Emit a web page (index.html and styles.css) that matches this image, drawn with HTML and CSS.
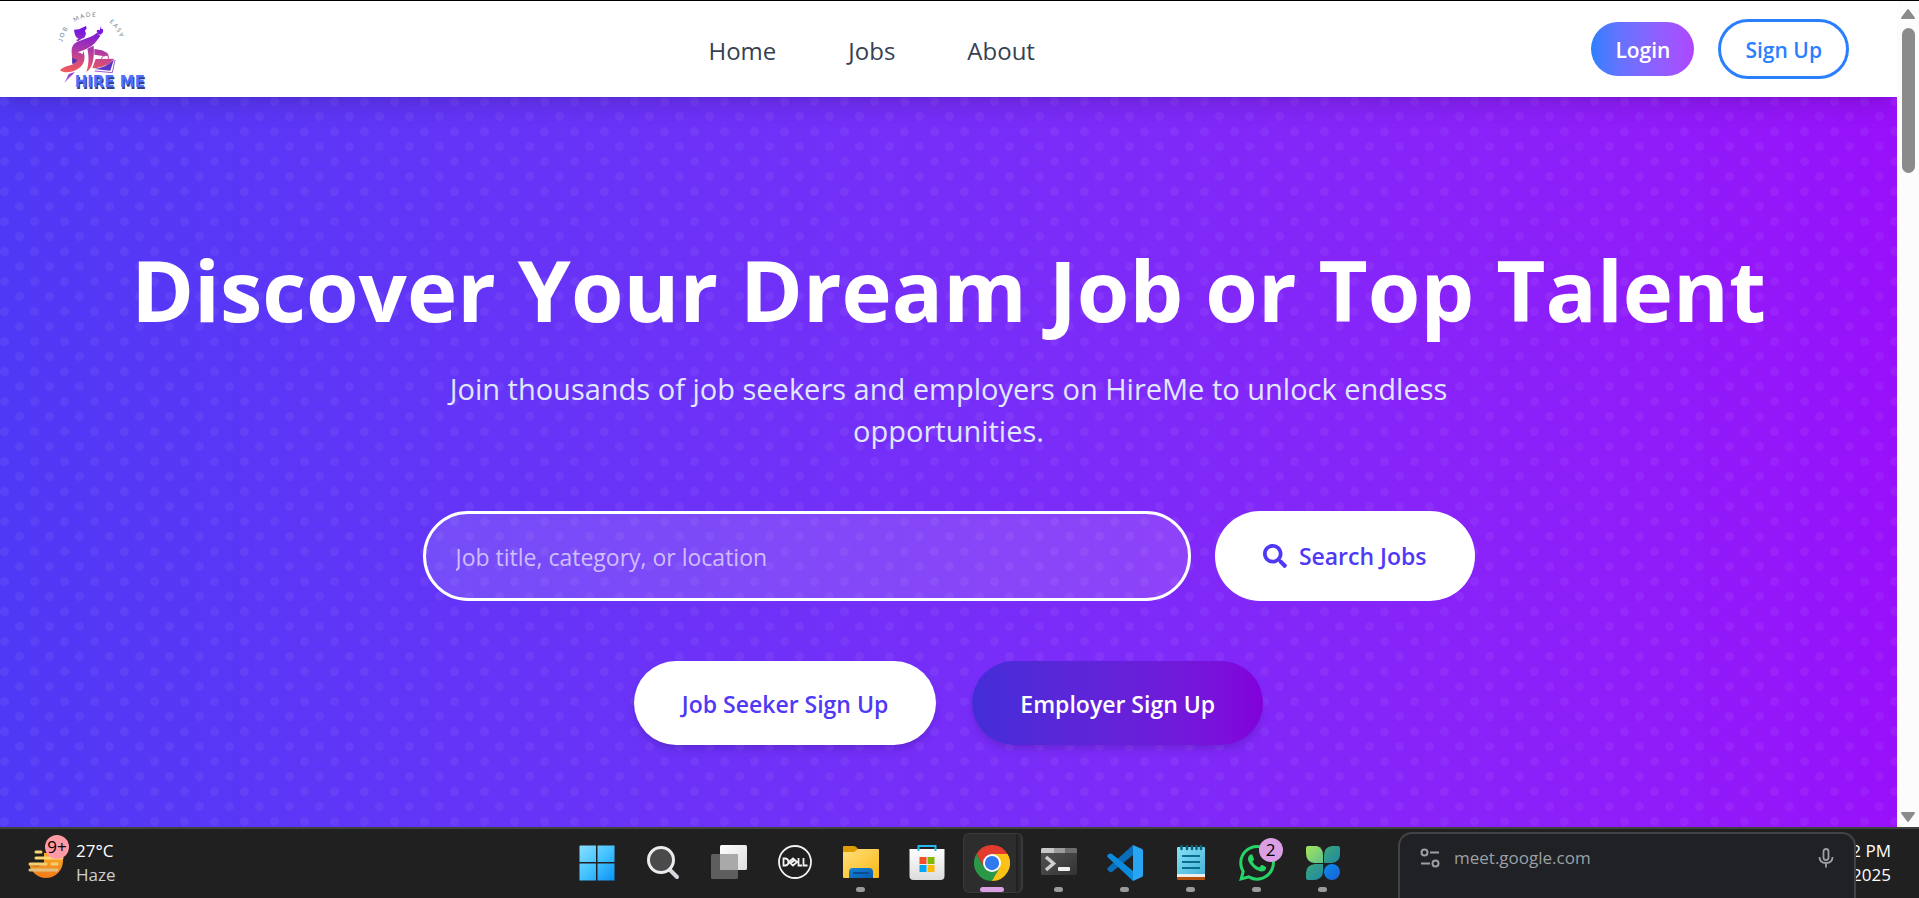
FILE: index.html
```html
<!DOCTYPE html>
<html lang="en">
<head>
<meta charset="utf-8">
<title>HireMe</title>
<link rel="stylesheet" href="styles.css">
</head>
<body>
<div class="browser">
  <div class="page">
    <header class="header">
      <a class="logo" href="#" aria-label="Hire Me">
        <svg width="104" height="96" viewBox="144 3 312 288">
          <defs>
            <linearGradient id="fig" gradientUnits="userSpaceOnUse" x1="250" y1="80" x2="240" y2="215">
              <stop offset="0" stop-color="#6d10ea"/><stop offset=".45" stop-color="#a535b0"/><stop offset="1" stop-color="#ef5a5c"/>
            </linearGradient>
            <linearGradient id="foot" gradientUnits="userSpaceOnUse" x1="215" y1="215" x2="196" y2="248">
              <stop offset="0" stop-color="#8a35c8"/><stop offset="1" stop-color="#b77be0"/>
            </linearGradient>
            <path id="arc" d="M187 138 A88 88 0 0 1 363 138"/>
          </defs>
          <g class="logo-motto">
            <text><textPath href="#arc" startOffset="12">J O B</textPath></text>
            <text><textPath href="#arc" startOffset="84">M A D E</textPath></text>
            <text><textPath href="#arc" startOffset="194">E A S Y</textPath></text>
          </g>
          <g fill="url(#fig)">
            <path d="M222 89 L237 88 L258 78 L260 85 L255 92 L258 101 L254 112 L243 118 L234 124 L228 121 L236 116 Q224 113 222 89Z"/>
            <path d="M303 78 L304 88 L309 87 L309 97 L302 104 L294 102 L290 94 L292 89 L299 91Z"/>
            <path d="M291 98 C282 107 262 114 240 122 C222 128 214 137 215 156 L217 188 C224 196 243 190 249 176 C253 165 245 159 232 157 C252 152 278 140 289 124 L301 108Z"/>
            <path d="M250 152 C258 176 252 194 236 205 C220 217 194 222 180 211 C186 203 199 198 213 195 C232 190 246 174 250 152Z"/>
            <path d="M262 146 C268 170 266 196 259 216 C276 206 284 180 281 137Z"/>
            <path d="M283 147 L306 151 L322 159 L327 167 L320 164 L314 169 L283 164Z"/>
            <path d="M287 177 L342 176 L330 190 Q304 205 277 205Z"/>
          </g>
          <path d="M217 174 L232 180 Q226 190 217 193Z" fill="#4b2fc0"/>
          <path d="M342 178 L331 212 L283 207 Q322 202 342 178Z" fill="#5a36c4"/>
          <path d="M345 180 L337 218 L284 213" fill="none" stroke="#9b5ad0" stroke-width="3"/>
          <path d="M304 176 Q308 164 324 167 L326 176" fill="none" stroke="#b94293" stroke-width="3"/>
          <path d="M193 249 L206 222 L225 216Z" fill="url(#foot)"/>
          <g class="logo-name"><text x="227" y="266" class="logo-shade">HIRE ME</text><text x="224" y="262">HIRE ME</text></g>
        </svg>
      </a>
      <nav class="nav">
        <a href="#">Home</a>
        <a href="#">Jobs</a>
        <a href="#">About</a>
      </nav>
      <div class="account">
        <button class="login">Login</button>
        <button class="signup">Sign Up</button>
      </div>
    </header>
    <main class="hero">
      <h1>Discover Your Dream Job or Top Talent</h1>
      <p class="lead">Join thousands of job seekers and employers on HireMe to unlock endless opportunities.</p>
      <form class="search">
        <input type="text" aria-label="Search jobs" placeholder="Job title, category, or location">
        <button type="button">
          <svg width="24" height="24" viewBox="0 0 512 512" fill="currentColor" aria-hidden="true"><path d="M505 442.700 405.300 343c-4.500-4.500-10.600-7-17-7H372c27.600-35.300 44-79.700 44-128C416 93.100 322.900 0 208 0S0 93.100 0 208s93.100 208 208 208c48.300 0 92.700-16.400 128-44v16.300c0 6.400 2.500 12.500 7 17l99.700 99.700c9.400 9.400 24.600 9.400 33.900 0l28.300-28.300c9.400-9.400 9.400-24.600.1-34zM208 336c-70.700 0-128-57.200-128-128 0-70.700 57.200-128 128-128 70.700 0 128 57.200 128 128 0 70.700-57.200 128-128 128z"/></svg>
          Search Jobs
        </button>
      </form>
      <div class="actions">
        <a class="seeker" href="#">Job Seeker Sign Up</a>
        <a class="employer" href="#">Employer Sign Up</a>
      </div>
    </main>
  </div>
  <div class="scrollbar" aria-hidden="true">
    <svg width="16" height="12" viewBox="0 0 16 12"><path d="M8 2 L14 10 H2Z" fill="#8b8b8b" stroke="#8b8b8b" stroke-width="2" stroke-linejoin="round"/></svg>
    <div class="track"><div class="thumb"></div></div>
    <svg width="16" height="12" viewBox="0 0 16 12"><path d="M8 10 L14 2 H2Z" fill="#8b8b8b" stroke="#8b8b8b" stroke-width="2" stroke-linejoin="round"/></svg>
  </div>
</div>

<footer class="taskbar">
  <div class="weather">
    <div class="weather-icon">
      <svg width="36" height="32" viewBox="0 0 36 32">
        <defs><linearGradient id="sun" x1="0" y1="0" x2="0" y2="1"><stop offset="0" stop-color="#fbc02d"/><stop offset="1" stop-color="#f07a1a"/></linearGradient></defs>
        <circle cx="18" cy="14" r="17" fill="url(#sun)"/>
        <path d="M0 0H36V6H0Z M0 6H16V16H0Z" fill="#202020"/>
        <path d="M2 17 Q8 20 14 17" stroke="#a8691e" stroke-width="2" fill="none"/>
        <g stroke-width="3" stroke-linecap="round"><path d="M8 5H13M8 11H34" stroke="#f7d774"/><path d="M2 17H18M24 17H29" stroke="#f3cf73"/><path d="M2 23H29" stroke="#e2bf80"/></g>
      </svg>
      <span class="badge badge-pink">9+</span>
    </div>
    <div class="stack"><span>27°C</span><span class="dim">Haze</span></div>
  </div>

  <div class="apps">
    <button class="app" aria-label="Start">
      <svg width="36" height="36" viewBox="0 0 36 36"><defs><linearGradient id="win" gradientUnits="userSpaceOnUse" x1="0" y1="0" x2="36" y2="36"><stop offset="0" stop-color="#8de0ff"/><stop offset=".5" stop-color="#43c3ff"/><stop offset="1" stop-color="#0a90f5"/></linearGradient></defs><path d="M1 .5H17V17H.5V1ZM18.500 .5H35.500V17H18.500ZM.5 18.500H17V35.500H.5ZM18.500 18.500H35.500V35.500H18.500Z" fill="url(#win)"/></svg>
    </button>
    <button class="app" aria-label="Search">
      <svg width="36" height="36" viewBox="0 0 36 36"><path d="M24 24 L32 32" stroke="#d5d9de" stroke-width="4" stroke-linecap="round"/><circle cx="16" cy="15" r="12.500" fill="#4a4a4a" stroke="#e9ebee" stroke-width="3"/></svg>
    </button>
    <button class="app" aria-label="Task view">
      <svg width="36" height="36" viewBox="0 0 36 36"><defs><linearGradient id="tv" x1="0" y1="0" x2="1" y2="1"><stop offset="0" stop-color="#fff"/><stop offset="1" stop-color="#dcdcdc"/></linearGradient></defs><rect x="9" y="0" width="27" height="25" rx="1.500" fill="url(#tv)"/><rect x="0" y="9" width="27" height="25" rx="1.500" fill="#666" fill-opacity=".88"/><rect x="9" y="9" width="18" height="16" fill="#a9a9a9"/></svg>
    </button>
    <button class="app" aria-label="Dell">
      <svg width="36" height="36" viewBox="0 0 36 36"><g fill="none" stroke="#f2f2f2"><circle cx="18" cy="17" r="16" stroke-width="1.800"/><path stroke-width="1.800" d="M6.500 13.500V20.500H8.500Q11.500 20 11.500 17 11.500 14 8.500 13.500ZM12 17 L16 13.500 20 17 16 20.500ZM14 18 L18 14.500M21.500 13V20.500H25M26.500 13V20.500H30.500"/></g></svg>
    </button>
    <button class="app running" aria-label="File Explorer">
      <svg width="36" height="36" viewBox="0 0 36 36"><defs><linearGradient id="fd" x1="0" y1="0" x2="1" y2="1"><stop offset="0" stop-color="#ffdf7e"/><stop offset="1" stop-color="#fcb813"/></linearGradient><linearGradient id="fb" x1="0" y1="0" x2="1" y2="1"><stop offset="0" stop-color="#1484d6"/><stop offset="1" stop-color="#0a5cad"/></linearGradient></defs><path d="M0 10V2Q0 1 1 1H11Q13 1 15 4H22V10Z" fill="#dd9b04"/><path d="M0 8Q0 7 1 7H11L15 4H35Q36 4 36 5V32Q36 33 35 33H1Q0 33 0 32Z" fill="url(#fd)"/><path d="M6 33V27Q6 23 10 23H26Q30 23 30 27V33Z" fill="url(#fb)"/><path d="M11 28H25" stroke="#0c4a91" stroke-width="2" stroke-linecap="round"/></svg>
    </button>
    <button class="app" aria-label="Microsoft Store">
      <svg width="36" height="36" viewBox="0 0 36 36"><defs><linearGradient id="st" x1="0" y1="0" x2="0" y2="1"><stop offset="0" stop-color="#fff"/><stop offset="1" stop-color="#dcdcdc"/></linearGradient></defs><path d="M.5 4H35.500V31Q35.500 35 31.500 35H4.500Q.5 35 .5 31Z" fill="url(#st)"/><path d="M9.500 6V1H26.500V6" stroke="#27b7ee" stroke-width="2" fill="none"/><path d="M10.500 12H17.500V19H10.500Z" fill="#f25022"/><path d="M18.500 12H25.500V19H18.500Z" fill="#7fba00"/><path d="M10.500 20H17.500V27H10.500Z" fill="#00a4ef"/><path d="M18.500 20H25.500V27H18.500Z" fill="#ffb900"/></svg>
    </button>
    <button class="app active" aria-label="Chrome">
      <svg width="36" height="36" viewBox="0 0 48 48"><path d="M24 24 V12 H44.800 A24 24 0 0 1 24 48Z" fill="#fbc116"/><path d="M3.200 12 L13.600 30 L24 24 L24 12 H44.800 A24 24 0 0 0 3.200 12Z" fill="#e33b2e"/><path d="M3.200 12 A24 24 0 0 0 24 48 L34.400 30 L24 24 L13.600 30Z" fill="#2a9846"/><circle cx="24" cy="24" r="12" fill="#fff"/><circle cx="24" cy="24" r="9.500" fill="#3079ee"/></svg>
    </button>
    <button class="app running" aria-label="Terminal">
      <svg width="36" height="36" viewBox="0 0 36 36"><defs><linearGradient id="tm" x1="0" y1="0" x2="1" y2="1"><stop offset="0" stop-color="#555"/><stop offset="1" stop-color="#333"/></linearGradient></defs><rect y="3" width="36" height="27" rx="1.500" fill="url(#tm)"/><path d="M1.500 3H13V8H0V4.500Q0 3 1.500 3Z" fill="#c8c8c8"/><path d="M13 3H24V8H13Z" fill="#9c9c9c"/><path d="M24 3H34.500Q36 3 36 4.500V8H24Z" fill="#6e6e6e"/><path d="M5 12 L12.500 18.500 L5 25" stroke="#cfcfcf" stroke-width="3.500" fill="none"/><rect x="17" y="22" width="12" height="4" rx="1" fill="#f0f0f0"/></svg>
    </button>
    <button class="app running" aria-label="Visual Studio Code">
      <svg width="36" height="36" viewBox="0 0 36 36"><path d="M26 0 L26 10 L5 27 Q3 28 1 25.500 Q-.5 23.500 1 22.500Z" fill="#0a6db8"/><path d="M1 12.500 Q-.5 11 1 9.500 Q3 8 5 9 L26 26 V36Z" fill="#0c8bdc"/><path d="M26 0 L35 4 Q36 4.500 36 6V30Q36 31.500 35 32 L26 36Z" fill="#27a5f3"/></svg>
    </button>
    <button class="app running" aria-label="Notepad">
      <svg width="36" height="36" viewBox="0 0 36 36"><defs><linearGradient id="np" x1="0" y1="0" x2="1" y2="1"><stop offset="0" stop-color="#86e2f6"/><stop offset="1" stop-color="#46b4d8"/></linearGradient></defs><path d="M4 30H32V34Q32 35 31 35H5Q4 35 4 34Z" fill="#b6500d"/><path d="M4 28H32V32H4Z" fill="#eee"/><path d="M5 2H31Q32 2 32 3V29H4V3Q4 2 5 2Z" fill="url(#np)"/><path d="M9 11H27M9 17H27M9 23H27" stroke="#0b6c92" stroke-width="2"/><path d="M8.500 1V4M14 1V4M19 1V4M23.500 1V4M28 1V4" stroke="#0f607c" stroke-width="2.500" stroke-linecap="round"/></svg>
    </button>
    <button class="app running" aria-label="WhatsApp">
      <svg width="36" height="36" viewBox="0 0 24 24" fill="#25d366"><path d="M17.472 14.382c-.297-.149-1.758-.867-2.030-.967-.273-.099-.471-.148-.67.150-.197.297-.767.966-.940 1.164-.173.199-.347.223-.644.075-.297-.150-1.255-.463-2.390-1.475-.883-.788-1.480-1.761-1.653-2.059-.173-.297-.018-.458.130-.606.134-.133.298-.347.446-.520.149-.174.198-.298.298-.497.099-.198.050-.371-.025-.520-.075-.149-.669-1.612-.916-2.207-.242-.579-.487-.500-.669-.510-.173-.008-.371-.010-.570-.010-.198 0-.520.074-.792.372-.272.297-1.040 1.016-1.040 2.479 0 1.462 1.065 2.875 1.213 3.074.149.198 2.096 3.200 5.077 4.487.709.306 1.262.489 1.694.625.712.227 1.360.195 1.871.118.571-.085 1.758-.719 2.006-1.413.248-.694.248-1.289.173-1.413-.074-.124-.272-.198-.570-.347m-5.421 7.403h-.004a9.870 9.870 0 01-5.031-1.378l-.361-.214-3.741.982.998-3.648-.235-.374a9.860 9.860 0 01-1.510-5.260c.001-5.450 4.436-9.884 9.888-9.884 2.640 0 5.122 1.030 6.988 2.898a9.825 9.825 0 012.893 6.994c-.003 5.450-4.437 9.884-9.885 9.884m8.413-18.297A11.815 11.815 0 0012.050 0C5.495 0 .160 5.335.157 11.892c0 2.096.547 4.142 1.588 5.945L.057 24l6.305-1.654a11.882 11.882 0 005.683 1.448h.005c6.554 0 11.890-5.335 11.893-11.893a11.821 11.821 0 00-3.480-8.413z"/></svg>
      <span class="badge badge-plum">2</span>
    </button>
    <button class="app running" aria-label="Clover app">
      <svg width="36" height="36" viewBox="0 0 36 36"><defs><linearGradient id="c1" x1="0" y1="0" x2="1" y2="1"><stop offset="0" stop-color="#a6e65a"/><stop offset="1" stop-color="#5fc08b"/></linearGradient><linearGradient id="c2" x1="0" y1="0" x2="1" y2="1"><stop offset="0" stop-color="#3aa878"/><stop offset="1" stop-color="#2188a5"/></linearGradient><linearGradient id="c3" x1="0" y1="0" x2="1" y2="1"><stop offset="0" stop-color="#0b8df0"/><stop offset="1" stop-color="#1b5fd0"/></linearGradient></defs><path d="M3 1H12Q18 3 18 10V18H9Q1 17 1 8V3Q1 1 3 1Z" fill="url(#c1)"/><path d="M33 1H27Q19 2 19 10V18H27Q35 17 35 9V3Q35 1 33 1Z" fill="url(#c2)"/><path d="M3 35H10Q18 34 18 26V19H10Q1 20 1 28V33Q1 35 3 35Z" fill="url(#c2)"/><circle cx="27" cy="27" r="8" fill="url(#c3)"/></svg>
    </button>
  </div>

  <div class="clock stack"><span>2 PM</span><span>2025</span></div>

  <div class="popup">
    <svg width="20" height="20" viewBox="0 0 20 20" fill="none" stroke="#9aa0a6" stroke-width="2" aria-hidden="true"><circle cx="4.500" cy="4.500" r="3"/><path d="M10 4.500H19M1 15.500H10"/><circle cx="15.500" cy="15.500" r="3"/></svg>
    <span class="popup-host">meet.google.com</span>
    <svg width="16" height="20" viewBox="0 0 16 20" fill="none" stroke="#9aa0a6" stroke-width="1.800" aria-hidden="true"><rect x="5.500" y="1" width="5" height="11" rx="2.500"/><path d="M1.500 9Q1.500 15 8 15 14.500 15 14.500 9M8 15V19.500"/></svg>
  </div>
</footer>
</body>
</html>
```

FILE: styles.css
```css
* {
  box-sizing: border-box;
}

body {
  margin: 0;
  height: 100vh;
  display: flex;
  flex-direction: column;
  overflow: hidden;
  font-family: "Segoe UI", "Open Sans", "Noto Sans", sans-serif;
}

button,
input {
  font: inherit;
  border: 0;
}

a {
  text-decoration: none;
}

.browser {
  flex: 1;
  min-height: 0;
  display: flex;
  border-top: 1px solid #000;
}

.page {
  flex: 1;
  min-width: 0;
  overflow: hidden;
}

/* Header */

.header {
  position: relative;
  z-index: 1;
  height: 96px;
  padding: 0 48px;
  display: grid;
  grid-template-columns: auto auto auto;
  justify-content: space-between;
  align-items: center;
  background: #fff;
  box-shadow: 0 15px 22px -4px rgba(0, 0, 0, .1), 0 6px 9px -6px rgba(0, 0, 0, .1);
}

.logo {
  display: flex;
}

.logo-motto {
  font: 18px "Lato", sans-serif;
  fill: #5f8198;
}

.logo-name {
  font: bold 45px "DejaVu Sans", sans-serif;
  fill: #4f70fb;
}

.logo-shade {
  fill: #33408f;
}

.nav {
  display: flex;
  gap: 72px;
  padding-top: 2px;
  font-size: 24px;
  font-weight: 500;
}

.nav a {
  color: #364153;
}

.account {
  display: flex;
  align-items: center;
  gap: 24px;
}

.account button {
  padding: 13px 24px 11px;
  border-radius: 40px;
  font-size: 21px;
  line-height: 30px;
  font-weight: 600;
}

.account .login {
  color: #fff;
  background: linear-gradient(to right in oklab, #2b7fff, #ad46ff);
}

.account .signup {
  color: #2b7fff;
  background: #fff;
  border: 3px solid #2b7fff;
}

/* Hero */

.hero {
  padding: 147px 24px 144px;
  display: flex;
  flex-direction: column;
  align-items: center;
  text-align: center;
  color: #fff;
  background:
    radial-gradient(circle at 15% 15%, rgba(255, 255, 255, .05) 4px, transparent 5px) 0 0 / 30px 30px,
    radial-gradient(circle at 65% 65%, rgba(255, 255, 255, .05) 4px, transparent 5px) 0 0 / 30px 30px,
    linear-gradient(to right in oklab, #4f39f6, #9810fa);
}

h1 {
  margin: 0 0 34px;
  font-size: 85px;
  line-height: 90px;
  font-weight: 700;
  white-space: nowrap;
}

.lead {
  margin: 0 0 59px;
  max-width: 1008px;
  font-size: 29px;
  line-height: 42px;
  color: #e0e7ff;
}

.search {
  width: 100%;
  max-width: 1052px;
  display: flex;
  gap: 24px;
  margin-bottom: 60px;
}

.search input {
  flex: 1;
  min-width: 0;
  height: 90px;
  padding: 2px 30px 0;
  border: 3px solid #fff;
  border-radius: 45px;
  background: rgba(255, 255, 255, .12);
  color: #fff;
  font-size: 23px;
}

.search input::placeholder {
  color: rgba(255, 255, 255, .65);
}

.search button {
  display: flex;
  align-items: center;
  gap: 12px;
  padding: 0 48px;
  border-radius: 45px;
  background: #fff;
  color: #4f39f6;
  font-size: 23px;
  font-weight: 600;
}

.actions {
  display: flex;
  gap: 36px;
}

.actions a {
  padding: 25px 48px 23px;
  border-radius: 42px;
  font-size: 23px;
  line-height: 36px;
  font-weight: 600;
  box-shadow: 0 6px 9px -1px rgba(0, 0, 0, .1), 0 3px 6px -3px rgba(0, 0, 0, .1);
}

.actions .seeker {
  background: #fff;
  color: #4f39f6;
}

.actions .employer {
  color: #fff;
  background: linear-gradient(to right in oklab, #432dd7, #8200db);
}

/* Scrollbar */

.scrollbar {
  width: 22px;
  padding: 7px 0 4px;
  display: flex;
  flex-direction: column;
  align-items: center;
  background: #fcfcfc;
}

.track {
  flex: 1;
  padding-top: 8px;
}

.thumb {
  width: 13px;
  height: 145px;
  border-radius: 7px;
  background: #8b8b8b;
}

/* Taskbar */

.taskbar {
  position: relative;
  height: 71px;
  padding: 0 28px 2px;
  display: grid;
  grid-template-columns: 1fr auto 1fr;
  align-items: center;
  border-top: 2px solid #404040;
  background: #202020;
  color: #fff;
  font-size: 17px;
}

.weather {
  display: flex;
  align-items: center;
  gap: 12px;
}

.weather-icon {
  position: relative;
  display: flex;
}

.stack {
  display: flex;
  flex-direction: column;
  line-height: 24px;
}

.dim {
  color: #cfcfcf;
}

.badge {
  position: absolute;
  width: 24px;
  height: 24px;
  border-radius: 50%;
  color: #000;
  font-size: 17px;
  line-height: 24px;
  text-align: center;
}

.badge-pink {
  top: -12px;
  left: 17px;
  background: #ff99a4;
}

.badge-plum {
  top: 5px;
  right: 4px;
  background: #dba0e3;
}

.apps {
  display: flex;
  gap: 6px;
}

.app {
  position: relative;
  width: 60px;
  height: 60px;
  padding: 0;
  display: grid;
  place-items: center;
  border-radius: 6px;
  background: none;
}

.running::after,
.active::after {
  content: "";
  position: absolute;
  bottom: 1px;
  width: 9px;
  height: 5px;
  border-radius: 3px;
  background: #9a9a9a;
}

.active {
  border: 1px solid #3a3a3a;
  border-right-width: 2px;
  background: linear-gradient(to right, #2d2d2d 52px, #202020 52px, #202020 54px, #2a2a2a 54px);
}

.active::after {
  bottom: 0;
  width: 24px;
  background: #dba0e3;
}

.clock {
  justify-self: end;
  text-align: right;
}

.popup {
  position: absolute;
  top: 3px;
  right: 63px;
  bottom: 0;
  width: 458px;
  padding: 14px 20px;
  display: flex;
  align-items: flex-start;
  gap: 14px;
  border: 2px solid #424346;
  border-bottom: 0;
  border-radius: 14px 14px 0 0;
  background: #202124;
}

.popup-host {
  flex: 1;
  color: #9aa0a6;
  font-size: 17px;
  line-height: 20px;
}
```
